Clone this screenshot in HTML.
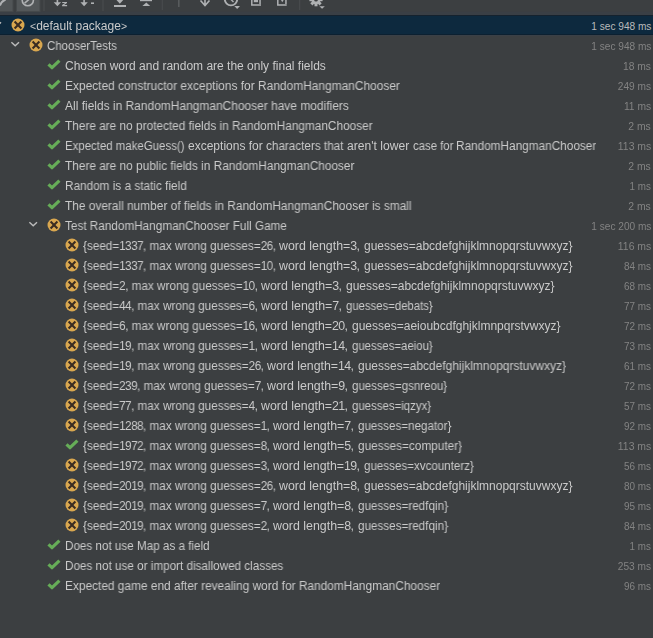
<!DOCTYPE html>
<html><head><meta charset="utf-8"><style>
html,body{margin:0;padding:0;}
body{width:653px;height:638px;overflow:hidden;background:#3c3f41;position:relative;font-family:"Liberation Sans",sans-serif;}
.r{position:absolute;left:0;width:653px;height:20px;}
.sel{background:#0d293e;}
.t{position:absolute;white-space:pre;will-change:transform;font-size:12px;line-height:20px;color:#cacaca;transform-origin:0 0;}
.dg{letter-spacing:-0.6px}
.ang{font-size:10.5px}
.d{position:absolute;white-space:pre;font-size:11px;line-height:20px;color:#838383;transform-origin:100% 0;right:2.0px;}
.sel .t{color:#cacaca}
.sel .d{color:#bbbbbb}
.ic{position:absolute;}
</style></head><body>
<svg style="position:absolute;left:0;top:0" width="653" height="15" viewBox="0 0 653 15"><rect x="0" y="0" width="653" height="15" fill="#3c3f41"/><rect x="0" y="11.5" width="653" height="3.5" fill="#3a3f45"/><rect x="-1" y="-1" width="14" height="12.5" fill="#515557" stroke="#45494b" stroke-width="1"/><path d="M-0.2 5.4Q1.8 1.4 5.6 -0.6" fill="none" stroke="#afb1b3" stroke-width="2.2"/><rect x="16.5" y="-1" width="23.5" height="12.5" fill="#535759" stroke="#45494b" stroke-width="1"/><circle cx="27.8" cy="0.2" r="5.6" fill="none" stroke="#afb1b3" stroke-width="1.6"/><path d="M31.5 -2.8L24.6 3.2" stroke="#afb1b3" stroke-width="1.6"/><rect x="43.5" y="0" width="1" height="11" fill="#4b4e50"/><path d="M56.6 -1H58.2V2.2H61.1L57.4 6.3L53.7 2.2H56.6Z" fill="#afb1b3"/><path d="M62.2 1.9H67V3.1L64.1 5.1H67.1V6.3H62.1V5.1L65 3.1H62.2Z" fill="#afb1b3"/><path d="M83.3 -1H84.9V2.2H87.8L84.1 6.3L80.4 2.2H83.3Z" fill="#afb1b3"/><rect x="91" y="2.4" width="3" height="1.6" fill="#afb1b3"/><rect x="102.5" y="0" width="1" height="11" fill="#4b4e50"/><path d="M116.5 0H123.2L119.85 3.8Z" fill="#afb1b3"/><rect x="114" y="5" width="12" height="2" fill="#afb1b3"/><rect x="140" y="-1" width="12" height="2.2" fill="#afb1b3"/><path d="M142.4 6.1H150.2L146.3 2.6Z" fill="#afb1b3"/><rect x="161.8" y="0" width="1" height="10" fill="#4a4d4f"/><rect x="178" y="0" width="1.6" height="7" fill="#585b5d"/><path d="M200.5 0.5L205 5.5L209.5 0.5M205 -1V5" fill="none" stroke="#afb1b3" stroke-width="1.6"/><circle cx="231" cy="-0.8" r="6.2" fill="none" stroke="#afb1b3" stroke-width="1.9"/><path d="M231 -0.5L233.5 2" stroke="#afb1b3" stroke-width="1.4"/><path d="M234.3 5.9H240L237.15 9.1Z" fill="#afb1b3"/><path d="M251.8 -1V5H261" fill="none" stroke="#afb1b3" stroke-width="1.5"/><path d="M253.8 -1H258V2.2H253.8Z" fill="#afb1b3"/><rect x="259.3" y="-1" width="1.5" height="5" fill="#afb1b3"/><path d="M277.8 -1V5H286.7" fill="none" stroke="#afb1b3" stroke-width="1.5"/><path d="M280.4 -1H284.2L282.3 2.2Z" fill="#afb1b3"/><rect x="285.2" y="-1" width="1.5" height="5" fill="#afb1b3"/><rect x="299.2" y="0" width="1" height="10" fill="#4b4e50"/><circle cx="316" cy="-0.3" r="4.6" fill="#afb1b3"/><rect x="314.5" y="-6.8999999999999995" width="3" height="3" fill="#afb1b3" transform="rotate(0 316 -0.3)"/><rect x="314.5" y="-6.8999999999999995" width="3" height="3" fill="#afb1b3" transform="rotate(45 316 -0.3)"/><rect x="314.5" y="-6.8999999999999995" width="3" height="3" fill="#afb1b3" transform="rotate(90 316 -0.3)"/><rect x="314.5" y="-6.8999999999999995" width="3" height="3" fill="#afb1b3" transform="rotate(135 316 -0.3)"/><rect x="314.5" y="-6.8999999999999995" width="3" height="3" fill="#afb1b3" transform="rotate(180 316 -0.3)"/><rect x="314.5" y="-6.8999999999999995" width="3" height="3" fill="#afb1b3" transform="rotate(225 316 -0.3)"/><rect x="314.5" y="-6.8999999999999995" width="3" height="3" fill="#afb1b3" transform="rotate(270 316 -0.3)"/><rect x="314.5" y="-6.8999999999999995" width="3" height="3" fill="#afb1b3" transform="rotate(315 316 -0.3)"/><circle cx="316" cy="-0.3" r="1.9" fill="#3c3f41"/><path d="M319.4 6.2H324.8L322.1 8.8Z" fill="#afb1b3"/></svg><div style='position:absolute;left:0;top:15px;width:653px;height:1px;background:#15222e;z-index:2'></div><div style='position:absolute;left:0;top:34px;width:653px;height:1px;background:#0c2030;z-index:2'></div><div style='position:absolute;left:0;top:35px;width:653px;height:1px;background:#3a4047;z-index:2'></div><div class="r sel" style="top:15px"><svg class="ic" style="left:-9px;top:3.1999999999999993px" width="12" height="12" viewBox="0 0 12 12"><path d='M2.4 4.3L6.2 7.7L10 4.3' fill='none' stroke='#bbbbbb' stroke-width='1.5'/></svg><svg class="ic" style="left:10px;top:2px" width="16" height="16" viewBox="0 0 16 16"><circle cx='8' cy='8' r='6.5' fill='#d9a74f'/><path d='M4.6 4.6L11.4 11.4M11.4 4.6L4.6 11.4' stroke='#3a2c22' stroke-width='2.1'/></svg><span class="t" style="left:30px;top:0.5px;transform:scaleX(1.0)"><span class="ang">&lt;</span>default package<span class="ang">&gt;</span></span><span class="d" style="top:0.5px;transform:scaleX(0.9185)">1 sec 948 ms</span></div>
<div class="r" style="top:35px"><svg class="ic" style="left:9px;top:3.1999999999999993px" width="12" height="12" viewBox="0 0 12 12"><path d='M2.4 4.3L6.2 7.7L10 4.3' fill='none' stroke='#bbbbbb' stroke-width='1.5'/></svg><svg class="ic" style="left:28px;top:2px" width="16" height="16" viewBox="0 0 16 16"><circle cx='8' cy='8' r='6.5' fill='#d9a74f'/><path d='M4.6 4.6L11.4 11.4M11.4 4.6L4.6 11.4' stroke='#3a2c22' stroke-width='2.1'/></svg><span class="t" style="left:47px;top:0.5px;transform:scaleX(0.9531)">ChooserTests</span><span class="d" style="top:0.5px;transform:scaleX(0.9185)">1 sec 948 ms</span></div>
<div class="r" style="top:55px"><svg class="ic" style="left:46px;top:2px" width="16" height="16" viewBox="0 0 16 16"><path d='M2.5 7.4L6 10.7L13.4 3.6' fill='none' stroke='#66ad58' stroke-width='3.2' stroke-linejoin='round'/></svg><span class="t" style="left:65.4px;top:0.5px;transform:scaleX(0.9992)">Chosen word and random are the only final fields</span><span class="d" style="top:0.5px;transform:scaleX(0.9345)">18 ms</span></div>
<div class="r" style="top:75px"><svg class="ic" style="left:46px;top:2px" width="16" height="16" viewBox="0 0 16 16"><path d='M2.5 7.4L6 10.7L13.4 3.6' fill='none' stroke='#66ad58' stroke-width='3.2' stroke-linejoin='round'/></svg><span class="t" style="left:65.4px;top:0.5px;transform:scaleX(0.9944)">Expected constructor exceptions for RandomHangmanChooser</span><span class="d" style="top:0.5px;transform:scaleX(0.9222)">249 ms</span></div>
<div class="r" style="top:95px"><svg class="ic" style="left:46px;top:2px" width="16" height="16" viewBox="0 0 16 16"><path d='M2.5 7.4L6 10.7L13.4 3.6' fill='none' stroke='#66ad58' stroke-width='3.2' stroke-linejoin='round'/></svg><span class="t" style="left:65.4px;top:0.5px;transform:scaleX(0.9968)">All fields in RandomHangmanChooser have modifiers</span><span class="d" style="top:0.5px;transform:scaleX(0.9345)">11 ms</span></div>
<div class="r" style="top:115px"><svg class="ic" style="left:46px;top:2px" width="16" height="16" viewBox="0 0 16 16"><path d='M2.5 7.4L6 10.7L13.4 3.6' fill='none' stroke='#66ad58' stroke-width='3.2' stroke-linejoin='round'/></svg><span class="t" style="left:65.4px;top:0.5px;transform:scaleX(0.9853)">There are no protected fields in RandomHangmanChooser</span><span class="d" style="top:0.5px;transform:scaleX(0.9478)">2 ms</span></div>
<div class="r" style="top:135px"><svg class="ic" style="left:46px;top:2px" width="16" height="16" viewBox="0 0 16 16"><path d='M2.5 7.4L6 10.7L13.4 3.6' fill='none' stroke='#66ad58' stroke-width='3.2' stroke-linejoin='round'/></svg><span class="t" style="left:65.4px;top:0.5px;transform:scaleX(0.9525)">Expected makeGuess() </span><span class="t" style="left:188.0px;top:0.5px;transform:scaleX(1.0007)">exceptions for </span><span class="t" style="left:266.1px;top:0.5px;transform:scaleX(0.9768)">characters that </span><span class="t" style="left:346.9px;top:0.5px;transform:scaleX(1.0092)">aren&#x27;t lower </span><span class="t" style="left:412.5px;top:0.5px;transform:scaleX(0.945)">case for </span><span class="t" style="left:456.0px;top:0.5px;transform:scaleX(0.9825)">RandomHangmanChooser</span><span class="d" style="top:0.5px;transform:scaleX(0.9486)">113 ms</span></div>
<div class="r" style="top:155px"><svg class="ic" style="left:46px;top:2px" width="16" height="16" viewBox="0 0 16 16"><path d='M2.5 7.4L6 10.7L13.4 3.6' fill='none' stroke='#66ad58' stroke-width='3.2' stroke-linejoin='round'/></svg><span class="t" style="left:65.4px;top:0.5px;transform:scaleX(0.9862)">There are no public fields in RandomHangmanChooser</span><span class="d" style="top:0.5px;transform:scaleX(0.9478)">2 ms</span></div>
<div class="r" style="top:175px"><svg class="ic" style="left:46px;top:2px" width="16" height="16" viewBox="0 0 16 16"><path d='M2.5 7.4L6 10.7L13.4 3.6' fill='none' stroke='#66ad58' stroke-width='3.2' stroke-linejoin='round'/></svg><span class="t" style="left:65.4px;top:0.5px;transform:scaleX(0.981)">Random is a static field</span><span class="d" style="top:0.5px;transform:scaleX(0.8913)">1 ms</span></div>
<div class="r" style="top:195px"><svg class="ic" style="left:46px;top:2px" width="16" height="16" viewBox="0 0 16 16"><path d='M2.5 7.4L6 10.7L13.4 3.6' fill='none' stroke='#66ad58' stroke-width='3.2' stroke-linejoin='round'/></svg><span class="t" style="left:65.4px;top:0.5px;transform:scaleX(0.9896)">The overall number of fields in RandomHangmanChooser is small</span><span class="d" style="top:0.5px;transform:scaleX(0.9478)">2 ms</span></div>
<div class="r" style="top:215px"><svg class="ic" style="left:27px;top:3.1999999999999993px" width="12" height="12" viewBox="0 0 12 12"><path d='M2.4 4.3L6.2 7.7L10 4.3' fill='none' stroke='#bbbbbb' stroke-width='1.5'/></svg><svg class="ic" style="left:46px;top:2px" width="16" height="16" viewBox="0 0 16 16"><circle cx='8' cy='8' r='6.5' fill='#d9a74f'/><path d='M4.6 4.6L11.4 11.4M11.4 4.6L4.6 11.4' stroke='#3a2c22' stroke-width='2.1'/></svg><span class="t" style="left:65.4px;top:0.5px;transform:scaleX(0.9786)">Test RandomHangmanChooser Full Game</span><span class="d" style="top:0.5px;transform:scaleX(0.9185)">1 sec 200 ms</span></div>
<div class="r" style="top:235px"><svg class="ic" style="left:64px;top:2px" width="16" height="16" viewBox="0 0 16 16"><circle cx='8' cy='8' r='6.5' fill='#d9a74f'/><path d='M4.6 4.6L11.4 11.4M11.4 4.6L4.6 11.4' stroke='#3a2c22' stroke-width='2.1'/></svg><span class="t" style="left:83.2px;top:0.5px;transform:scaleX(0.9777)">{seed=<span class="dg">1337</span>, max wrong guesses=<span class="dg">26</span>, </span><span class="t" style="left:279.3px;top:0.5px;transform:scaleX(1.0318)">word length=<span class="dg">3</span>, </span><span class="t" style="left:363.7px;top:0.5px;transform:scaleX(0.9981)">guesses=abcdefghijklmnopqrstuvwxyz}</span><span class="d" style="top:0.5px;transform:scaleX(0.9486)">116 ms</span></div>
<div class="r" style="top:255px"><svg class="ic" style="left:64px;top:2px" width="16" height="16" viewBox="0 0 16 16"><circle cx='8' cy='8' r='6.5' fill='#d9a74f'/><path d='M4.6 4.6L11.4 11.4M11.4 4.6L4.6 11.4' stroke='#3a2c22' stroke-width='2.1'/></svg><span class="t" style="left:83.2px;top:0.5px;transform:scaleX(0.9777)">{seed=<span class="dg">1337</span>, max wrong guesses=<span class="dg">10</span>, </span><span class="t" style="left:279.3px;top:0.5px;transform:scaleX(1.0318)">word length=<span class="dg">3</span>, </span><span class="t" style="left:363.7px;top:0.5px;transform:scaleX(0.9981)">guesses=abcdefghijklmnopqrstuvwxyz}</span><span class="d" style="top:0.5px;transform:scaleX(0.9033)">84 ms</span></div>
<div class="r" style="top:275px"><svg class="ic" style="left:64px;top:2px" width="16" height="16" viewBox="0 0 16 16"><circle cx='8' cy='8' r='6.5' fill='#d9a74f'/><path d='M4.6 4.6L11.4 11.4M11.4 4.6L4.6 11.4' stroke='#3a2c22' stroke-width='2.1'/></svg><span class="t" style="left:83.2px;top:0.5px;transform:scaleX(0.9766)">{seed=<span class="dg">2</span>, max wrong guesses=<span class="dg">10</span>, </span><span class="t" style="left:261.3px;top:0.5px;transform:scaleX(1.0318)">word length=<span class="dg">3</span>, </span><span class="t" style="left:345.7px;top:0.5px;transform:scaleX(0.999)">guesses=abcdefghijklmnopqrstuvwxyz}</span><span class="d" style="top:0.5px;transform:scaleX(0.9033)">68 ms</span></div>
<div class="r" style="top:295px"><svg class="ic" style="left:64px;top:2px" width="16" height="16" viewBox="0 0 16 16"><circle cx='8' cy='8' r='6.5' fill='#d9a74f'/><path d='M4.6 4.6L11.4 11.4M11.4 4.6L4.6 11.4' stroke='#3a2c22' stroke-width='2.1'/></svg><span class="t" style="left:83.2px;top:0.5px;transform:scaleX(0.9766)">{seed=<span class="dg">44</span>, max wrong guesses=<span class="dg">6</span>, </span><span class="t" style="left:261.3px;top:0.5px;transform:scaleX(1.0318)">word length=<span class="dg">7</span>, </span><span class="t" style="left:345.7px;top:0.5px;transform:scaleX(0.9444)">guesses=debats}</span><span class="d" style="top:0.5px;transform:scaleX(0.9033)">77 ms</span></div>
<div class="r" style="top:315px"><svg class="ic" style="left:64px;top:2px" width="16" height="16" viewBox="0 0 16 16"><circle cx='8' cy='8' r='6.5' fill='#d9a74f'/><path d='M4.6 4.6L11.4 11.4M11.4 4.6L4.6 11.4' stroke='#3a2c22' stroke-width='2.1'/></svg><span class="t" style="left:83.2px;top:0.5px;transform:scaleX(0.9766)">{seed=<span class="dg">6</span>, max wrong guesses=<span class="dg">16</span>, </span><span class="t" style="left:261.3px;top:0.5px;transform:scaleX(1.0287)">word length=<span class="dg">20</span>, </span><span class="t" style="left:351.7px;top:0.5px;transform:scaleX(0.9985)">guesses=aeioubcdfghjklmnpqrstvwxyz}</span><span class="d" style="top:0.5px;transform:scaleX(0.9033)">72 ms</span></div>
<div class="r" style="top:335px"><svg class="ic" style="left:64px;top:2px" width="16" height="16" viewBox="0 0 16 16"><circle cx='8' cy='8' r='6.5' fill='#d9a74f'/><path d='M4.6 4.6L11.4 11.4M11.4 4.6L4.6 11.4' stroke='#3a2c22' stroke-width='2.1'/></svg><span class="t" style="left:83.2px;top:0.5px;transform:scaleX(0.9766)">{seed=<span class="dg">19</span>, max wrong guesses=<span class="dg">1</span>, </span><span class="t" style="left:261.3px;top:0.5px;transform:scaleX(1.0287)">word length=<span class="dg">14</span>, </span><span class="t" style="left:351.7px;top:0.5px;transform:scaleX(0.9479)">guesses=aeiou}</span><span class="d" style="top:0.5px;transform:scaleX(0.9033)">73 ms</span></div>
<div class="r" style="top:355px"><svg class="ic" style="left:64px;top:2px" width="16" height="16" viewBox="0 0 16 16"><circle cx='8' cy='8' r='6.5' fill='#d9a74f'/><path d='M4.6 4.6L11.4 11.4M11.4 4.6L4.6 11.4' stroke='#3a2c22' stroke-width='2.1'/></svg><span class="t" style="left:83.2px;top:0.5px;transform:scaleX(0.977)">{seed=<span class="dg">19</span>, max wrong guesses=<span class="dg">26</span>, </span><span class="t" style="left:267.3px;top:0.5px;transform:scaleX(1.0287)">word length=<span class="dg">14</span>, </span><span class="t" style="left:357.7px;top:0.5px;transform:scaleX(0.9976)">guesses=abcdefghijklmnopqrstuvwxyz}</span><span class="d" style="top:0.5px;transform:scaleX(0.9033)">61 ms</span></div>
<div class="r" style="top:375px"><svg class="ic" style="left:64px;top:2px" width="16" height="16" viewBox="0 0 16 16"><circle cx='8' cy='8' r='6.5' fill='#d9a74f'/><path d='M4.6 4.6L11.4 11.4M11.4 4.6L4.6 11.4' stroke='#3a2c22' stroke-width='2.1'/></svg><span class="t" style="left:83.2px;top:0.5px;transform:scaleX(0.977)">{seed=<span class="dg">239</span>, max wrong guesses=<span class="dg">7</span>, </span><span class="t" style="left:267.3px;top:0.5px;transform:scaleX(1.0318)">word length=<span class="dg">9</span>, </span><span class="t" style="left:351.7px;top:0.5px;transform:scaleX(0.9603)">guesses=gsnreou}</span><span class="d" style="top:0.5px;transform:scaleX(0.9033)">72 ms</span></div>
<div class="r" style="top:395px"><svg class="ic" style="left:64px;top:2px" width="16" height="16" viewBox="0 0 16 16"><circle cx='8' cy='8' r='6.5' fill='#d9a74f'/><path d='M4.6 4.6L11.4 11.4M11.4 4.6L4.6 11.4' stroke='#3a2c22' stroke-width='2.1'/></svg><span class="t" style="left:83.2px;top:0.5px;transform:scaleX(0.9766)">{seed=<span class="dg">77</span>, max wrong guesses=<span class="dg">4</span>, </span><span class="t" style="left:261.3px;top:0.5px;transform:scaleX(1.0287)">word length=<span class="dg">21</span>, </span><span class="t" style="left:351.7px;top:0.5px;transform:scaleX(0.9529)">guesses=iqzyx}</span><span class="d" style="top:0.5px;transform:scaleX(0.9033)">57 ms</span></div>
<div class="r" style="top:415px"><svg class="ic" style="left:64px;top:2px" width="16" height="16" viewBox="0 0 16 16"><circle cx='8' cy='8' r='6.5' fill='#d9a74f'/><path d='M4.6 4.6L11.4 11.4M11.4 4.6L4.6 11.4' stroke='#3a2c22' stroke-width='2.1'/></svg><span class="t" style="left:83.2px;top:0.5px;transform:scaleX(0.9774)">{seed=<span class="dg">1288</span>, max wrong guesses=<span class="dg">1</span>, </span><span class="t" style="left:273.3px;top:0.5px;transform:scaleX(1.0318)">word length=<span class="dg">7</span>, </span><span class="t" style="left:357.7px;top:0.5px;transform:scaleX(0.9681)">guesses=negator}</span><span class="d" style="top:0.5px;transform:scaleX(0.9033)">92 ms</span></div>
<div class="r" style="top:435px"><svg class="ic" style="left:64px;top:2px" width="16" height="16" viewBox="0 0 16 16"><path d='M2.5 7.4L6 10.7L13.4 3.6' fill='none' stroke='#66ad58' stroke-width='3.2' stroke-linejoin='round'/></svg><span class="t" style="left:83.2px;top:0.5px;transform:scaleX(0.9774)">{seed=<span class="dg">1972</span>, max wrong guesses=<span class="dg">8</span>, </span><span class="t" style="left:273.3px;top:0.5px;transform:scaleX(1.0318)">word length=<span class="dg">5</span>, </span><span class="t" style="left:357.7px;top:0.5px;transform:scaleX(0.9841)">guesses=computer}</span><span class="d" style="top:0.5px;transform:scaleX(0.9486)">113 ms</span></div>
<div class="r" style="top:455px"><svg class="ic" style="left:64px;top:2px" width="16" height="16" viewBox="0 0 16 16"><circle cx='8' cy='8' r='6.5' fill='#d9a74f'/><path d='M4.6 4.6L11.4 11.4M11.4 4.6L4.6 11.4' stroke='#3a2c22' stroke-width='2.1'/></svg><span class="t" style="left:83.2px;top:0.5px;transform:scaleX(0.9774)">{seed=<span class="dg">1972</span>, max wrong guesses=<span class="dg">3</span>, </span><span class="t" style="left:273.3px;top:0.5px;transform:scaleX(1.0287)">word length=<span class="dg">19</span>, </span><span class="t" style="left:363.7px;top:0.5px;transform:scaleX(0.9657)">guesses=xvcounterz}</span><span class="d" style="top:0.5px;transform:scaleX(0.9033)">56 ms</span></div>
<div class="r" style="top:475px"><svg class="ic" style="left:64px;top:2px" width="16" height="16" viewBox="0 0 16 16"><circle cx='8' cy='8' r='6.5' fill='#d9a74f'/><path d='M4.6 4.6L11.4 11.4M11.4 4.6L4.6 11.4' stroke='#3a2c22' stroke-width='2.1'/></svg><span class="t" style="left:83.2px;top:0.5px;transform:scaleX(0.9777)">{seed=<span class="dg">2019</span>, max wrong guesses=<span class="dg">26</span>, </span><span class="t" style="left:279.3px;top:0.5px;transform:scaleX(1.0318)">word length=<span class="dg">8</span>, </span><span class="t" style="left:363.7px;top:0.5px;transform:scaleX(0.9981)">guesses=abcdefghijklmnopqrstuvwxyz}</span><span class="d" style="top:0.5px;transform:scaleX(0.9033)">80 ms</span></div>
<div class="r" style="top:495px"><svg class="ic" style="left:64px;top:2px" width="16" height="16" viewBox="0 0 16 16"><circle cx='8' cy='8' r='6.5' fill='#d9a74f'/><path d='M4.6 4.6L11.4 11.4M11.4 4.6L4.6 11.4' stroke='#3a2c22' stroke-width='2.1'/></svg><span class="t" style="left:83.2px;top:0.5px;transform:scaleX(0.9774)">{seed=<span class="dg">2019</span>, max wrong guesses=<span class="dg">7</span>, </span><span class="t" style="left:273.3px;top:0.5px;transform:scaleX(1.0318)">word length=<span class="dg">8</span>, </span><span class="t" style="left:357.7px;top:0.5px;transform:scaleX(0.9734)">guesses=redfqin}</span><span class="d" style="top:0.5px;transform:scaleX(0.9033)">95 ms</span></div>
<div class="r" style="top:515px"><svg class="ic" style="left:64px;top:2px" width="16" height="16" viewBox="0 0 16 16"><circle cx='8' cy='8' r='6.5' fill='#d9a74f'/><path d='M4.6 4.6L11.4 11.4M11.4 4.6L4.6 11.4' stroke='#3a2c22' stroke-width='2.1'/></svg><span class="t" style="left:83.2px;top:0.5px;transform:scaleX(0.9774)">{seed=<span class="dg">2019</span>, max wrong guesses=<span class="dg">2</span>, </span><span class="t" style="left:273.3px;top:0.5px;transform:scaleX(1.0318)">word length=<span class="dg">8</span>, </span><span class="t" style="left:357.7px;top:0.5px;transform:scaleX(0.9734)">guesses=redfqin}</span><span class="d" style="top:0.5px;transform:scaleX(0.9033)">84 ms</span></div>
<div class="r" style="top:535px"><svg class="ic" style="left:46px;top:2px" width="16" height="16" viewBox="0 0 16 16"><path d='M2.5 7.4L6 10.7L13.4 3.6' fill='none' stroke='#66ad58' stroke-width='3.2' stroke-linejoin='round'/></svg><span class="t" style="left:65.4px;top:0.5px;transform:scaleX(0.9721)">Does not use Map as a field</span><span class="d" style="top:0.5px;transform:scaleX(0.8913)">1 ms</span></div>
<div class="r" style="top:555px"><svg class="ic" style="left:46px;top:2px" width="16" height="16" viewBox="0 0 16 16"><path d='M2.5 7.4L6 10.7L13.4 3.6' fill='none' stroke='#66ad58' stroke-width='3.2' stroke-linejoin='round'/></svg><span class="t" style="left:65.4px;top:0.5px;transform:scaleX(0.9742)">Does not use or import disallowed classes</span><span class="d" style="top:0.5px;transform:scaleX(0.9222)">253 ms</span></div>
<div class="r" style="top:575px"><svg class="ic" style="left:46px;top:2px" width="16" height="16" viewBox="0 0 16 16"><path d='M2.5 7.4L6 10.7L13.4 3.6' fill='none' stroke='#66ad58' stroke-width='3.2' stroke-linejoin='round'/></svg><span class="t" style="left:65.4px;top:0.5px;transform:scaleX(0.9902)">Expected game end after revealing word for RandomHangmanChooser</span><span class="d" style="top:0.5px;transform:scaleX(0.9033)">96 ms</span></div>
</body></html>
